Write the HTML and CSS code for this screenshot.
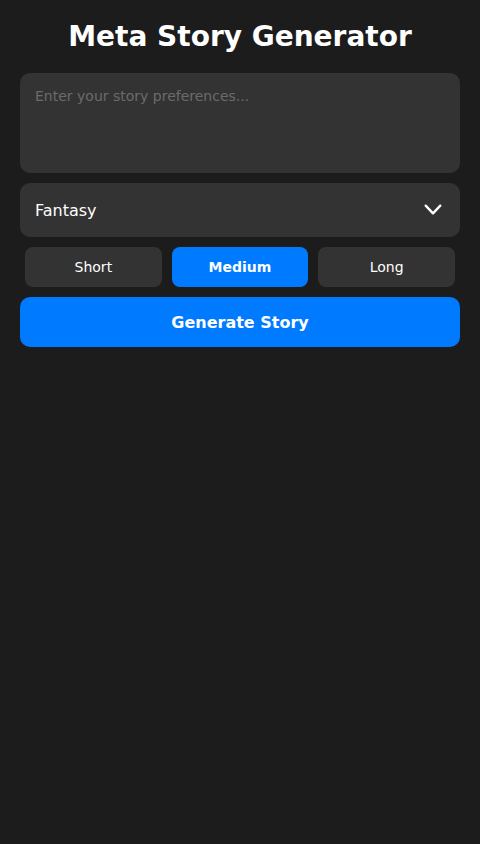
FILE: index.html
```html
<!DOCTYPE html>
<html lang="en">
<head>
  <meta charset="UTF-8" />
  <meta name="viewport" content="width=device-width, initial-scale=1.0"/>
  <title>Meta Story Generator</title>
  <link rel="stylesheet" href="styles.css">
</head>
<body>

  <div class="container">
    <h1 class="titulo">Meta Story Generator</h1>

    <textarea class="preferencias" placeholder="Enter your story preferences..."></textarea>

    <div class="genero">
      <span>Fantasy</span>
      <svg width="18" height="12" viewBox="0 0 18 12" fill="none">
        <path d="M1.7 1.7 L9 9.3 L16.3 1.7" stroke="#fff" stroke-width="2.4" stroke-linecap="round" stroke-linejoin="round"/>
      </svg>
    </div>

    <div class="longitud">
      <button>Short</button>
      <button class="activo">Medium</button>
      <button>Long</button>
    </div>

    <button class="generar">Generate Story</button>
  </div>

</body>
</html>
```

FILE: styles.css
```css
body {
  font-family: 'DejaVu Sans', sans-serif;
  background: #1c1c1c;
  color: #fff;
  margin: 0;
}

.container {
  padding: 20px;
  display: flex;
  flex-direction: column;
  gap: 10px;
}

.titulo {
  font-size: 28px;
  text-align: center;
  margin: 0 0 10px;
  line-height: 33px;
}

.preferencias {
  font-family: inherit;
  font-size: 14px;
  height: 100px;
  box-sizing: border-box;
  padding: 15px;
  background: #333;
  color: #fff;
  border: none;
  border-radius: 10px;
  resize: none;
  outline: none;
}

.preferencias::placeholder {
  color: #6b6b6b;
}

.genero {
  height: 54px;
  box-sizing: border-box;
  padding: 0 18px 0 15px;
  background: #333;
  border-radius: 10px;
  display: flex;
  align-items: center;
  justify-content: space-between;
  font-size: 16px;
}

.longitud {
  display: flex;
}

.longitud button {
  flex: 1;
  margin: 0 5px;
  height: 40px;
  font-family: inherit;
  font-size: 14px;
  background: #333;
  color: #fff;
  border: none;
  border-radius: 8px;
  cursor: pointer;
}

.longitud .activo {
  background: #007aff;
  font-weight: bold;
}

.generar {
  height: 50px;
  font-family: inherit;
  font-size: 16px;
  font-weight: bold;
  background: #007aff;
  color: #fff;
  border: none;
  border-radius: 10px;
  cursor: pointer;
}
```
